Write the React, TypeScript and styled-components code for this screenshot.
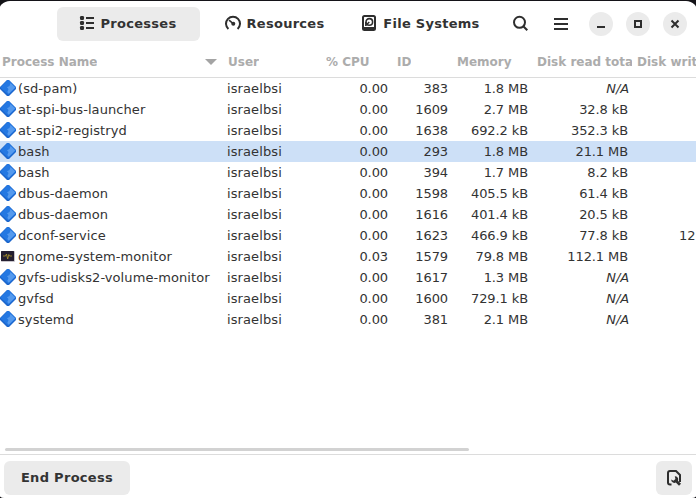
import React from "react";
import styled, { createGlobalStyle } from "styled-components";

const GlobalStyle = createGlobalStyle`
  * { box-sizing: border-box; }
  html, body { margin: 0; padding: 0; background: #141318; overflow: hidden; }
  button { font: inherit; color: inherit; border: 0; padding: 0; margin: 0; }
  svg { display: block; flex: none; }
`;

const Desktop = styled.div`
  width: 696px;
  height: 498px;
  padding-top: 1px;
  overflow: hidden;
  background: #141318;
`;

const Window = styled.main`
  display: flex;
  flex-direction: column;
  width: 700px;
  height: 497px;
  margin-left: -2px;
  padding: 0 2px;
  background: #fff;
  border-radius: 12px 12px 6px 6px;
  overflow: hidden;
  color: #333;
  font: 13px/21px "DejaVu Sans", sans-serif;
`;

const HeaderBar = styled.header`
  display: flex;
  align-items: center;
  height: 46px;
  flex: none;
  padding-left: 57px;
`;

const Tab = styled.button<{ $active?: boolean; $width: number }>`
  display: flex;
  align-items: center;
  justify-content: center;
  gap: 6px;
  width: ${(p) => p.$width}px;
  height: 34px;
  margin-right: 2px;
  padding-bottom: 2px;
  padding-right: ${(p) => (p.$active ? 2 : 0)}px;
  border-radius: 6px;
  background: ${(p) => (p.$active ? "#ebebeb" : "transparent")};
  font-weight: bold;
  letter-spacing: 0.27px;
  white-space: nowrap;
`;

const FlatButton = styled.button<{ $gap: number; $lift?: number }>`
  display: grid;
  place-items: center;
  width: 34px;
  height: 34px;
  margin-left: ${(p) => p.$gap}px;
  padding-bottom: ${(p) => p.$lift ?? 0}px;
  background: transparent;
`;

const WindowControls = styled.div`
  display: flex;
  gap: 13px;
  margin-left: 11px;
`;

const ControlButton = styled.button`
  display: grid;
  place-items: center;
  width: 24px;
  height: 24px;
  border-radius: 50%;
  background: #ebebeb;
`;

const Table = styled.section`
  flex: none;
  width: 696px;
  height: 400px;
  overflow: hidden;
`;

const columns = "222px 99px 71px 60px 80px 100px 100px";

const HeadRow = styled.div`
  display: grid;
  grid-template-columns: ${columns};
  height: 31px;
  border-bottom: 1px solid #dcdcdc;
  color: #acacac;
  font-size: 12px;
  font-weight: bold;
  line-height: 30px;
`;

const HeadCell = styled.div<{ $first?: boolean; $inset?: number }>`
  display: flex;
  align-items: center;
  justify-content: space-between;
  padding-left: ${(p) => p.$inset ?? 5}px;
  padding-right: ${(p) => (p.$first ? 5 : 0)}px;
  min-width: 0;
`;

const HeadLabel = styled.span`
  display: block;
  overflow: hidden;
  white-space: nowrap;
`;

const Row = styled.div<{ $selected: boolean }>`
  display: grid;
  grid-template-columns: ${columns};
  height: 21px;
  background: ${(p) => (p.$selected ? "#cde0f7" : "transparent")};
`;

const NameCell = styled.div`
  display: flex;
  align-items: center;
  gap: 2px;
  letter-spacing: 0.08px;
  white-space: nowrap;

  svg { margin-bottom: 1px; }
`;

const UserCell = styled.div`
  padding-left: 5px;
  letter-spacing: 0.1px;
`;

const NumberCell = styled.div<{ $missing?: boolean }>`
  padding-right: ${(p) => (p.$missing ? 3 : 4)}px;
  text-align: right;
  white-space: nowrap;
  letter-spacing: -0.1px;
  font-style: ${(p) => (p.$missing ? "italic" : "normal")};
`;

const WriteCell = styled.div`
  padding-left: 47px;
  white-space: nowrap;
`;

const ScrollTrack = styled.div`
  flex: none;
  height: 7px;
  padding: 1px 5px 0;
`;

const ScrollThumb = styled.div`
  width: 464px;
  height: 3px;
  border-radius: 2px;
  background: #d2d2d2;
`;

const ActionBar = styled.footer`
  display: flex;
  justify-content: space-between;
  flex: none;
  height: 44px;
  padding: 6px 4px 0;
  border-top: 1px solid #dcdcdc;
`;

const ActionButton = styled.button<{ $width: number; $lift?: number }>`
  display: grid;
  place-items: center;
  width: ${(p) => p.$width}px;
  height: 34px;
  padding-bottom: ${(p) => p.$lift ?? 0}px;
  border-radius: 6px;
  background: #ebebeb;
  font-weight: bold;
  letter-spacing: 0.3px;
`;

const ListIcon = () => (
  <svg width="16" height="16" viewBox="0 0 16 16" fill="#2e2e2e">
    <rect x="1" y="1" width="4" height="4" rx="1.3" />
    <rect x="1" y="6" width="4" height="4" rx="1.3" />
    <rect x="1" y="11" width="4" height="4" rx="1.3" />
    <path d="M7 2h8v2H7zM7 7h8v2H7zM7 12h8v2H7z" />
  </svg>
);

const GaugeIcon = () => (
  <svg width="16" height="16" viewBox="0 0 16 16" fill="none" stroke="#2e2e2e" strokeWidth="2">
    <path d="M3.4 14A7 7 0 1 1 12.6 14" />
    <path d="M4 5.2 8.5 8.8" strokeWidth="1.6" />
    <circle cx="8.3" cy="8.7" r="2" fill="#2e2e2e" stroke="none" />
  </svg>
);

const DiskIcon = () => (
  <svg width="16" height="16" viewBox="0 0 16 16" fill="none" stroke="#2e2e2e" strokeWidth="2">
    <rect x="2" y="1" width="12" height="14" rx="1.5" />
    <path d="M2 13.5h12" strokeWidth="3" />
    <circle cx="8.3" cy="6.9" r="3.3" strokeWidth="1.6" />
    <path d="M4.8 11V7M5.2 10 8.3 7" strokeWidth="1.5" />
  </svg>
);

const SearchIcon = () => (
  <svg width="16" height="16" viewBox="0 0 16 16" fill="none" stroke="#2e2e2e" strokeWidth="2">
    <circle cx="7.5" cy="7.3" r="5.5" />
    <path d="m11.3 11.2 4 4" />
  </svg>
);

const MenuIcon = () => (
  <svg width="16" height="16" viewBox="0 0 16 16" fill="#2e2e2e">
    <path d="M1 2h14v2H1zM1 7h14v2H1zM1 12h14v2H1z" />
  </svg>
);

const MinimizeIcon = () => (
  <svg width="16" height="16" viewBox="0 0 16 16">
    <path d="M4 10h8v2H4z" fill="#2e2e2e" />
  </svg>
);

const MaximizeIcon = () => (
  <svg width="16" height="16" viewBox="0 0 16 16">
    <path d="M5 5h6v6H5z" fill="none" stroke="#2e2e2e" strokeWidth="2" />
  </svg>
);

const CloseIcon = () => (
  <svg width="16" height="16" viewBox="0 0 16 16">
    <path d="m4.5 4.5 7 7m0-7-7 7" stroke="#2e2e2e" strokeWidth="2" />
  </svg>
);

const SortArrow = () => (
  <svg width="12" height="6" viewBox="0 0 12 6">
    <path d="M0 0h12L6 6z" fill="#a4a4a4" />
  </svg>
);

const ProgramIcon = () => (
  <svg width="16" height="16" viewBox="0 0 16 16">
    <path d="M7 0h2l7 7v2l-7 7H7L0 9V7z" fill="#1c66cc" />
    <path d="M7.5 0h1L16 7.5 8.3 14.7.3 7.5z" fill="#2478e2" />
    <path d="m10.5 3 4.700 4.500-6.400 6.300L7.300 12l1.200-3L7 7.300 9.500 6z" fill="#559aee" />
  </svg>
);

const MonitorIcon = () => (
  <svg width="16" height="16" viewBox="0 0 16 16">
    <rect x="1" y="3" width="14" height="11" rx="1" fill="#c8c5cb" />
    <rect x="1" y="3" width="13" height="10" rx=".5" fill="#241f31" />
    <path d="M3 8h2.500L6.500 6l1.200 5L8.800 6.500 9.500 8H12" fill="none" stroke="#b39a2c" strokeWidth=".8" />
  </svg>
);

const DetailsIcon = () => (
  <svg width="16" height="16" viewBox="0 0 16 16" fill="none" stroke="#2e2e2e" strokeWidth="2">
    <path d="M5.500 14.500H4a2 2 0 0 1-2-2V3a2 2 0 0 1 2-2h6l4 4v7" />
    <path d="M8.800 6.200a3.300 3.300 0 0 1 3.200 4.500l3 3-2 2-3.200-3.100a3.300 3.300 0 0 1-4.600-3.200l2.300 1.300 1.900-1.700z" fill="#2e2e2e" stroke="none" />
  </svg>
);

type Process = [name: string, cpu: string, id: string, memory: string, read: string, write?: string];

const processes: Process[] = [
  ["(sd-pam)", "0.00", "383", "1.8 MB", "N/A"],
  ["at-spi-bus-launcher", "0.00", "1609", "2.7 MB", "32.8 kB"],
  ["at-spi2-registryd", "0.00", "1638", "692.2 kB", "352.3 kB"],
  ["bash", "0.00", "293", "1.8 MB", "21.1 MB"],
  ["bash", "0.00", "394", "1.7 MB", "8.2 kB"],
  ["dbus-daemon", "0.00", "1598", "405.5 kB", "61.4 kB"],
  ["dbus-daemon", "0.00", "1616", "401.4 kB", "20.5 kB"],
  ["dconf-service", "0.00", "1623", "466.9 kB", "77.8 kB", "12"],
  ["gnome-system-monitor", "0.03", "1579", "79.8 MB", "112.1 MB"],
  ["gvfs-udisks2-volume-monitor", "0.00", "1617", "1.3 MB", "N/A"],
  ["gvfsd", "0.00", "1600", "729.1 kB", "N/A"],
  ["systemd", "0.00", "381", "2.1 MB", "N/A"],
];

const headings = ["User", "% CPU", "ID", "Memory", "Disk read tota", "Disk writ"];

export default function App() {
  return (
    <Desktop>
      <GlobalStyle />
      <Window>
        <HeaderBar>
          <Tab $active $width={143}><ListIcon />Processes</Tab>
          <Tab $width={145}><GaugeIcon />Resources</Tab>
          <Tab $width={143}><DiskIcon />File Systems</Tab>
          <FlatButton $gap={9} $lift={2} aria-label="Search"><SearchIcon /></FlatButton>
          <FlatButton $gap={7} aria-label="Menu"><MenuIcon /></FlatButton>
          <WindowControls>
            <ControlButton aria-label="Minimize"><MinimizeIcon /></ControlButton>
            <ControlButton aria-label="Maximize"><MaximizeIcon /></ControlButton>
            <ControlButton aria-label="Close"><CloseIcon /></ControlButton>
          </WindowControls>
        </HeaderBar>
        <Table>
          <HeadRow>
            <HeadCell $first $inset={2}><HeadLabel>Process Name</HeadLabel><SortArrow /></HeadCell>
            {headings.map((label) => (
              <HeadCell key={label} $inset={label === "User" ? 6 : 5}><HeadLabel>{label}</HeadLabel></HeadCell>
            ))}
          </HeadRow>
          {processes.map(([name, cpu, id, memory, read, write], index) => (
            <Row key={id} $selected={index === 3}>
              <NameCell>
                {name === "gnome-system-monitor" ? <MonitorIcon /> : <ProgramIcon />}
                {name}
              </NameCell>
              <UserCell>israelbsi</UserCell>
              <NumberCell>{cpu}</NumberCell>
              <NumberCell>{id}</NumberCell>
              <NumberCell>{memory}</NumberCell>
              <NumberCell $missing={read === "N/A"}>{read}</NumberCell>
              <WriteCell>{write}</WriteCell>
            </Row>
          ))}
        </Table>
        <ScrollTrack><ScrollThumb /></ScrollTrack>
        <ActionBar>
          <ActionButton $width={126} $lift={2}>End Process</ActionButton>
          <ActionButton $width={36} aria-label="Process properties"><DetailsIcon /></ActionButton>
        </ActionBar>
      </Window>
    </Desktop>
  );
}
